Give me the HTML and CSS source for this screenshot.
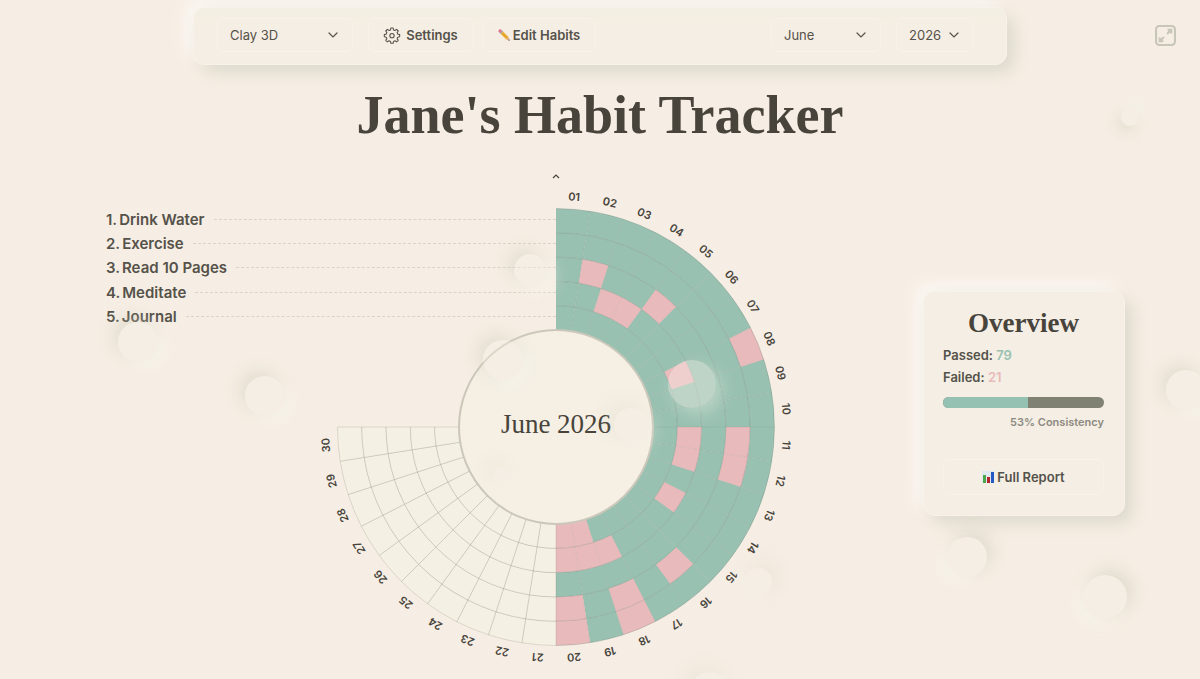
FILE: index.html
```html
<!DOCTYPE html>
<html lang="en">
<head>
    <meta charset="UTF-8">
    <meta name="viewport" content="width=device-width, initial-scale=1.0">
    <title>Jane's Habit Tracker</title>
    <link rel="stylesheet" href="styles.css">
</head>
<body>
    <header class="toolbar">
        <div class="select-box theme-select">
            <select id="theme" aria-label="Theme">
                <option selected>Clay 3D</option>
                <option>Minimal</option>
                <option>Dark</option>
            </select>
            <svg class="chevron" viewBox="0 0 10 6"><path d="M1 1l4 4 4-4"/></svg>
        </div>
        <button type="button" class="btn settings-btn">
            <svg class="gear" viewBox="0 0 24 24">
                <path d="M10.300 1.500h3.400l.6 2.900 2.200.9 2.500-1.700 2.400 2.400-1.700 2.500.9 2.200 2.900.6v3.400l-2.900.6-.9 2.200 1.700 2.500-2.400 2.400-2.500-1.700-2.200.9-.6 2.900h-3.400l-.6-2.900-2.200-.9-2.500 1.700-2.400-2.400 1.700-2.500-.9-2.200-2.900-.6v-3.400l2.900-.6.9-2.200-1.700-2.500L5 3.600l2.500 1.700 2.200-.9z"/>
                <circle cx="12" cy="13" r="3.200"/>
            </svg>
            Settings
        </button>
        <button type="button" class="btn edit-btn">
            <svg class="pencil" viewBox="0 0 12 12">
                <path d="M2.900.4Q1.800-.1 1 .8T.5 2.800l1.400 1.500 2.500-2.500z" fill="#e0748c"/>
                <path d="M4.400 1.800L1.900 4.300l.8.8 2.500-2.500z" fill="#8fa3b0"/>
                <path d="M5.200 2.600L2.700 5.100l5.400 5.300 2.400-2.400z" fill="#f0b73c"/>
                <path d="M4.400 3.400L3.500 4.300l5.500 5.300.8-.9z" fill="#d99a2b"/>
                <path d="M10.500 8L8.100 10.400l3.600 1.300z" fill="#dcae7c"/>
                <path d="M11.300 10.300l-1 1 1.400.4z" fill="#443c34"/>
            </svg>
            Edit Habits
        </button>
        <div class="select-box month-select">
            <select id="month" aria-label="Month">
                <option>May</option>
                <option selected>June</option>
                <option>July</option>
            </select>
            <svg class="chevron" viewBox="0 0 10 6"><path d="M1 1l4 4 4-4"/></svg>
        </div>
        <div class="select-box year-select">
            <select id="year" aria-label="Year">
                <option>2025</option>
                <option selected>2026</option>
                <option>2027</option>
            </select>
            <svg class="chevron" viewBox="0 0 10 6"><path d="M1 1l4 4 4-4"/></svg>
        </div>
    </header>

    <button type="button" class="expand-btn" aria-label="Full screen">
        <svg viewBox="0 0 20 20">
            <rect x="1" y="1" width="18" height="18" rx="3"/>
            <path d="M12 4.500h3.500v3.500M15 5l-3.500 3.500M8 15.500H4.500V12M5 15l3.500-3.500"/>
        </svg>
    </button>

    <h1>Jane's Habit Tracker</h1>

    <main class="tracker">
        <svg class="wheel" id="wheel" viewBox="-242 -260 484 504" role="img" aria-label="Habits for June 2026"></svg>

        <ol class="habits">
            <li><span class="num">1.</span><span>Drink Water</span></li>
            <li><span class="num">2.</span><span>Exercise</span></li>
            <li><span class="num">3.</span><span>Read 10 Pages</span></li>
            <li><span class="num">4.</span><span>Meditate</span></li>
            <li><span class="num">5.</span><span>Journal</span></li>
        </ol>

        <aside class="overview">
            <h2>Overview</h2>
            <p>Passed: <span class="passed">79</span></p>
            <p>Failed: <span class="failed">21</span></p>
            <div class="bar"><div class="bar-fill" style="width: 53%"></div></div>
            <div class="consistency">53% Consistency</div>
            <button type="button" class="btn report-btn">
                <svg class="chart-icon" viewBox="0 0 12 12">
                    <rect width="12" height="12" fill="#dfe9ee"/>
                    <rect x="1" y="4" width="3" height="8" fill="#4ca64c"/>
                    <rect x="5" y="6" width="3" height="6" fill="#b3262b"/>
                    <rect x="9" y="1" width="3" height="11" fill="#2458c4"/>
                </svg>
                Full Report
            </button>
        </aside>
    </main>

    <!-- floating clay bumps -->
    <div class="bumps">
        <i class="bump b1"></i>
        <i class="bump b2"></i>
        <i class="bump b3"></i>
        <i class="bump b4"></i>
        <i class="bump b5 faint"></i>
        <i class="bump b6 faint"></i>
        <i class="bump b7 glass"></i>
        <i class="bump b8 up"></i>
        <i class="bump b9"></i>
        <i class="bump b10 left"></i>
        <i class="bump b11 left"></i>
        <i class="bump b12 left faint"></i>
        <i class="bump b13 faint"></i>
    </div>

    <script src="script.js"></script>
</body>
</html>
```
FILE: styles.css
```css
* {
    margin: 0;
    padding: 0;
    box-sizing: border-box;
}

body {
    position: relative;
    min-height: 100vh;
    padding-top: 7px;
    overflow: hidden;
    background: #f6eee4;
    color: #55524a;
    font-family: Inter, sans-serif;
    font-size: 13px;
}

button, select {
    font: inherit;
    color: inherit;
    cursor: pointer;
}

.toolbar {
    display: flex;
    align-items: center;
    width: 100%;
    max-width: 814px;
    height: 58px;
    margin: 0 auto;
    padding: 0 32px 2px 23px;
    border: 1px solid #f8f3ea;
    border-radius: 12px;
    background: linear-gradient(#f3efe3, #f5eee4 40%);
    box-shadow: 8px 8px 16px #dedace, -8px -8px 16px #faf7f2;
}

.select-box {
    display: grid;
    align-items: center;
    height: 34px;
    border: 1px solid #f8f3ea;
    border-radius: 6px;
}

.select-box select {
    grid-area: 1 / 1;
    width: 100%;
    height: 100%;
    padding-left: 12px;
    border: none;
    background: none;
    appearance: none;
    outline: none;
}

.chevron {
    grid-area: 1 / 1;
    justify-self: end;
    width: 10px;
    height: 6px;
    margin-right: 14px;
    fill: none;
    stroke: #55524a;
    stroke-width: 1.2;
    stroke-linecap: round;
    pointer-events: none;
}

.theme-select {
    width: 136px;
    margin-right: 15px;
}

.month-select {
    width: 110px;
    margin-left: auto;
    margin-right: 15px;
}

.year-select {
    width: 78px;
}

.btn {
    display: flex;
    align-items: center;
    justify-content: center;
    gap: 3px;
    height: 34px;
    border: 1px solid #f8f3ea;
    border-radius: 6px;
    background: none;
    font-size: 13px;
    font-weight: 600;
}

.settings-btn {
    gap: 6px;
    width: 106px;
    margin-right: 8px;
}

.edit-btn {
    width: 114px;
}

.gear {
    width: 16px;
    height: 16px;
    overflow: visible;
    fill: none;
    stroke: #55524a;
    stroke-width: 1.6;
    stroke-linejoin: round;
}

.pencil, .chart-icon {
    width: 12px;
    height: 12px;
}

.expand-btn {
    position: absolute;
    top: 25px;
    right: 24px;
    width: 21px;
    height: 21px;
    border: none;
    background: none;
}

.expand-btn svg {
    display: block;
    fill: none;
    stroke: #c8c5b9;
    stroke-width: 2;
}

h1, h2 {
    color: #48443c;
    font-family: Georgia, "Liberation Serif", serif;
    font-weight: bold;
    text-align: center;
}

h1 {
    margin-top: 20px;
    font-size: 54px;
    line-height: 60px;
}

.tracker {
    display: grid;
    grid-template-columns: minmax(0, 1fr) 242px 242px 327px;
    align-items: start;
    padding: 22px 75px 0 106px;
}

.wheel {
    grid-area: 1 / 2 / 2 / 4;
    display: block;
    width: 484px;
    height: 504px;
}

.wheel .disc {
    fill: #f5efe4;
    stroke: #cbc7ba;
    stroke-width: 2;
}

.wheel .cell {
    fill: #f5f0e4;
    stroke: rgba(110, 108, 95, 0.2);
    stroke-width: 1;
}

.wheel .pass {
    fill: #99c1b1;
    stroke: none;
}

.wheel .fail {
    fill: #e9babb;
    stroke: none;
}

.wheel .line {
    fill: none;
    stroke: rgba(90, 110, 100, 0.25);
}

.wheel .spoke {
    stroke: rgba(90, 110, 100, 0.1);
}

.wheel .day {
    fill: #48443c;
    font-size: 11px;
    font-weight: 600;
    text-anchor: middle;
}

.wheel .month {
    fill: #48443c;
    font-family: Georgia, "Liberation Serif", serif;
    font-size: 27px;
    text-anchor: middle;
}

.wheel .pointer {
    fill: none;
    stroke: #48443c;
    stroke-width: 1.2;
}

.habits {
    grid-area: 1 / 1 / 2 / 3;
    display: grid;
    grid-template-rows: repeat(5, 1fr);
    height: 122px;
    margin-top: 40px;
    list-style: none;
    font-size: 15px;
    font-weight: 600;
}

.habits li {
    display: flex;
    align-items: center;
    white-space: nowrap;
}

.habits .num {
    margin-right: 2px;
}

.habits li::after {
    content: "";
    flex: 1;
    margin-left: 9px;
    border-top: 1px dashed #d9d4c9;
}

.overview {
    grid-area: 1 / 4;
    justify-self: end;
    width: 202px;
    margin-top: 124px;
    padding: 16px 20px 20px 19px;
    border: 1px solid #f8f3ea;
    border-radius: 12px;
    background: #f4eee4;
    box-shadow: 8px 8px 16px #dedace, -8px -8px 16px #faf7f2;
}

.overview h2 {
    margin-bottom: 6px;
    font-size: 27px;
    line-height: 30px;
}

.overview p {
    font-weight: 600;
    line-height: 22px;
}

.passed {
    color: #99c1b1;
}

.failed {
    color: #e9babb;
}

.bar {
    height: 11px;
    margin-top: 9px;
    overflow: hidden;
    border-radius: 6px;
    background: #7f8273;
}

.bar-fill {
    height: 100%;
    background: #95c1b2;
}

.consistency {
    margin: 6px 0 29px;
    color: #8d8a80;
    font-size: 11px;
    font-weight: 600;
    line-height: 16px;
    text-align: right;
}

.report-btn {
    width: 100%;
    height: 36px;
}

.bumps {
    position: absolute;
    inset: 0;
    overflow: hidden;
    pointer-events: none;
}

.bump {
    position: absolute;
    width: 40px;
    height: 40px;
    border-radius: 50%;
    background: rgba(246, 238, 228, 0.4);
    box-shadow: -6px -6px 16px rgba(190, 188, 170, 0.3), 6px 6px 16px rgba(246, 245, 236, 0.8);
}

.bump.left {
    box-shadow: 6px -6px 16px rgba(190, 188, 170, 0.35), -6px 6px 16px rgba(246, 245, 236, 0.8);
}

.bump.up {
    box-shadow: -4px 6px 14px rgba(190, 188, 170, 0.35), 4px -6px 14px rgba(244, 245, 236, 0.8);
}

.bump.faint {
    opacity: 0.4;
}

.bump.glass {
    background: rgba(245, 240, 232, 0.4);
    box-shadow: 6px 6px 16px rgba(246, 245, 236, 0.35);
}

.b1 { left: 118px; top: 322px; }
.b2 { left: 245px; top: 376px; }
.b3 { left: 514px; top: 254px; width: 32px; height: 32px; }
.b4 { left: 483px; top: 340px; }
.b5 { left: 614px; top: 408px; width: 34px; height: 34px; }
.b6 { left: 494px; top: 468px; width: 14px; height: 14px; }
.b7 { left: 668px; top: 360px; width: 48px; height: 48px; }
.b8 { left: 1121px; top: 108px; width: 18px; height: 18px; }
.b9 { left: 1166px; top: 370px; }
.b10 { left: 947px; top: 537px; }
.b11 { left: 1083px; top: 575px; width: 44px; height: 44px; }
.b12 { left: 744px; top: 568px; width: 28px; height: 28px; }
.b13 { left: 690px; top: 672px; }
```
FILE: script.js
```js
const DAYS = 30;
const STEP = 9;
const TODAY = 20;
const INNER = 97;
const OUTER = 218.5;

// failed days per habit, outer ring first
const failed = [
    [8, 18, 20],
    [11, 12, 16, 18, 20],
    [2, 5],
    [3, 4, 8, 11, 12, 14, 18, 19, 20],
    [19, 20]
];

const wheel = document.getElementById('wheel');
const ring = (OUTER - INNER) / failed.length;

function add(tag, attrs, text) {
    const el = document.createElementNS('http://www.w3.org/2000/svg', tag);
    for (const key in attrs) el.setAttribute(key, attrs[key]);
    if (text) el.textContent = text;
    wheel.appendChild(el);
}

function point(r, deg) {
    const a = deg * Math.PI / 180;
    return (r * Math.sin(a)).toFixed(2) + ' ' + (-r * Math.cos(a)).toFixed(2);
}

for (let day = 1; day <= DAYS; day++) {
    const from = (day - 1) * STEP;
    const to = day * STEP;

    failed.forEach((days, i) => {
        const r2 = OUTER - i * ring;
        const r1 = r2 - ring;
        let state = '';
        if (day <= TODAY) state = days.includes(day) ? ' fail' : ' pass';
        add('path', {
            class: 'cell' + state,
            d: `M${point(r1, from)} L${point(r2, from)} A${r2} ${r2} 0 0 1 ${point(r2, to)} L${point(r1, to)} A${r1} ${r1} 0 0 0 ${point(r1, from)}Z`
        });
    });

    add('text', {
        class: 'day',
        y: -227,
        transform: `rotate(${from + STEP / 2})`
    }, String(day).padStart(2, '0'));
}

// grid over the filled half
for (let day = 1; day < TODAY; day++) {
    add('path', { class: 'line spoke', d: `M${point(INNER, day * STEP)} L${point(OUTER, day * STEP)}` });
}
for (let i = 0; i < failed.length; i++) {
    const r = OUTER - i * ring;
    add('path', { class: 'line', d: `M${point(r, 0)} A${r} ${r} 0 0 1 ${point(r, TODAY * STEP)}` });
}

add('circle', { class: 'disc', r: INNER });
add('text', { class: 'month', y: 6 }, 'June 2026');
add('path', { class: 'pointer', d: 'M-3 -249l3 -3 3 3' });
```
